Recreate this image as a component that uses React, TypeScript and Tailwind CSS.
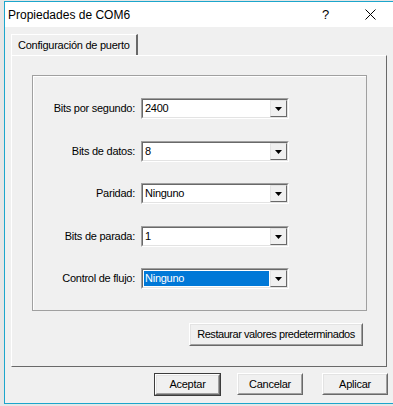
import React from 'react';

const font = { fontFamily: '"Liberation Sans", Arial, sans-serif' };

interface ComboProps {
    value: string;
    selected?: boolean;
}

const Combo: React.FC<ComboProps> = ({ value, selected }) => {
    return (
        <div className="w-[148px] h-[21px] border border-t-[#a0a0a0] border-l-[#a0a0a0] border-r-white border-b-white">
            <div className="w-full h-full flex items-center bg-white border border-t-[#696969] border-l-[#696969] border-r-[#e3e3e3] border-b-[#e3e3e3] pl-[1px]">
                <div
                    className={
                        selected
                            ? 'flex-1 h-[15px] flex items-center pl-[1px] bg-[#0078d7] text-white'
                            : 'flex-1 h-[15px] flex items-center pl-[1px] text-black'
                    }
                >
                    {value}
                </div>
                <div className="w-[17px] h-[17px] ml-[1px] bg-[#f0f0f0] border border-t-[#e3e3e3] border-l-[#e3e3e3] border-r-[#696969] border-b-[#696969] flex items-center justify-center">
                    <svg width="7" height="4" viewBox="0 0 7 4">
                        <path d="M0 0 H7 L3.5 4 Z" fill="#000" />
                    </svg>
                </div>
            </div>
        </div>
    );
};

const Row: React.FC<{ label: string; value: string; selected?: boolean; className: string }> = ({ label, value, selected, className }) => (
    <div className={'flex items-center ' + className}>
        <div className="w-[104px] text-right pr-[2px] whitespace-nowrap">{label}</div>
        <div className="ml-[4px]">
            <Combo value={value} selected={selected} />
        </div>
    </div>
);

const Button: React.FC<{ label: string; isDefault?: boolean; className: string }> = ({ label, isDefault, className }) => (
    <div className={(isDefault ? 'border border-[#3c3c3c] ' : '') + className}>
        <div className="w-full h-full border border-t-white border-l-white border-r-[#696969] border-b-[#696969]">
            <div className="w-full h-full border border-t-[#e3e3e3] border-l-[#e3e3e3] border-r-[#a0a0a0] border-b-[#a0a0a0] bg-[#f0f0f0] flex items-center justify-center text-black whitespace-nowrap">
                {label}
            </div>
        </div>
    </div>
);

const App: React.FC = () => {
    return (
        <div className="w-[393px] h-[406px] overflow-hidden bg-[#e6e6e6] pt-[1px] pl-[4px] text-[11px] tracking-[-0.25px]" style={font}>
            <div className="w-[420px] h-[403px] border-l border-t border-b border-[#1ca6cc] bg-[#f0f0f0] flex flex-col">
                <div className="h-[25px] bg-white flex items-center pl-[3px] text-[12px] tracking-normal text-black">
                    <span>Propiedades de COM6</span>
                    <span className="ml-[192px] text-[13px]">?</span>
                    <svg className="ml-[36px]" width="11" height="11" viewBox="0 0 11 11">
                        <path d="M0.5 0.5 L10.5 10.5 M10.5 0.5 L0.5 10.5" stroke="#000" strokeWidth="1" />
                    </svg>
                </div>

                <div className="pl-[6px] pt-[7px]">
                    <div className="w-[127px] h-[21px] border-t border-l border-t-white border-l-white border-r-2 border-r-[#696969] flex items-center pl-[6px] text-black whitespace-nowrap">
                        Configuración de puerto
                    </div>

                    <div className="w-[376px] h-[312px] border border-t-white border-l-white border-r-[#696969] border-b-[#696969] pl-[20px] pt-[19px]">
                        <div className="w-[335px] h-[236px] border border-[#a0a0a0] shadow-[inset_1px_1px_0_#ffffff] flex flex-col pt-[22px] text-black">
                            <Row label="Bits por segundo:" value="2400" className="" />
                            <Row label="Bits de datos:" value="8" className="mt-[22px]" />
                            <Row label="Paridad:" value="Ninguno" className="mt-[21px]" />
                            <Row label="Bits de parada:" value="1" className="mt-[22px]" />
                            <Row label="Control de flujo:" value="Ninguno" selected className="mt-[21px]" />
                        </div>
                        <Button label="Restaurar valores predeterminados" className="ml-[157px] mt-[12px] w-[174px] h-[23px] tracking-[-0.45px]" />
                    </div>

                    <div className="flex mt-[6px]">
                        <Button label="Aceptar" isDefault className="ml-[143px] w-[67px] h-[23px]" />
                        <Button label="Cancelar" className="ml-[16px] w-[66px] h-[22px]" />
                        <Button label="Aplicar" className="ml-[19px] w-[66px] h-[22px]" />
                    </div>
                </div>
            </div>
        </div>
    );
};

export default App;
